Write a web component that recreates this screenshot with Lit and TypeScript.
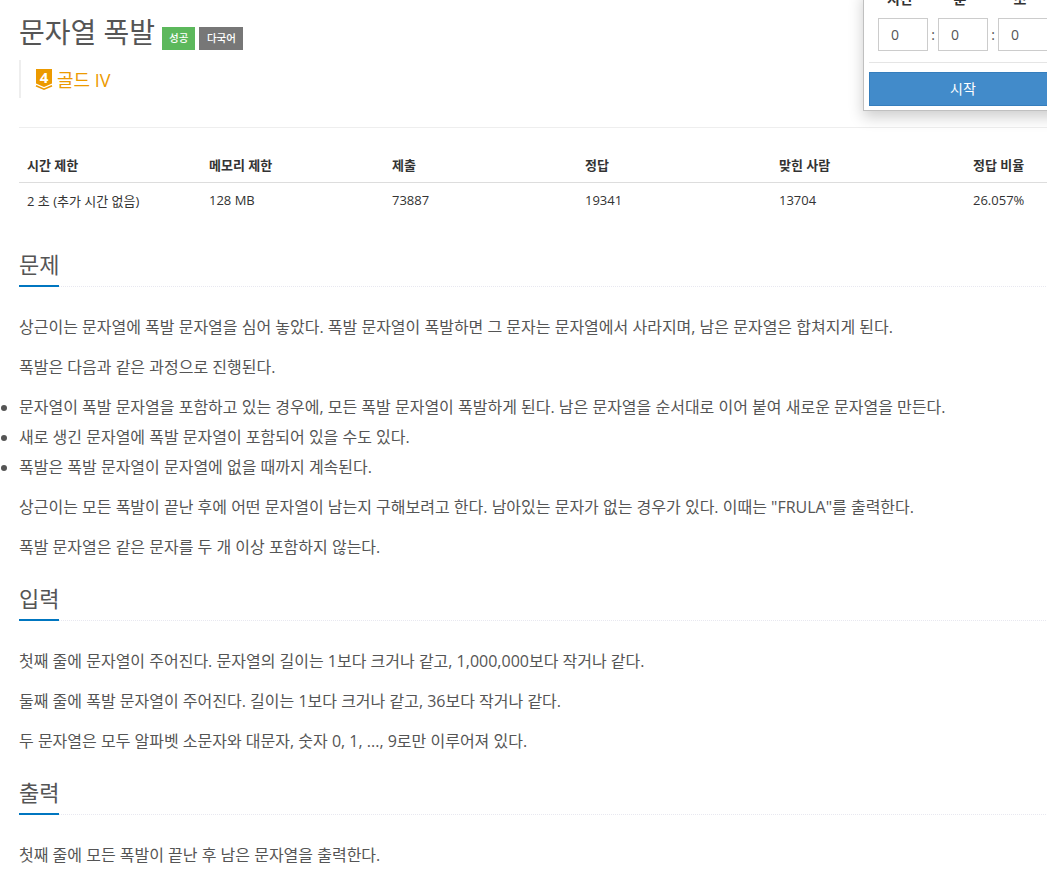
import { LitElement, html, css } from "lit";
import { customElement } from "lit/decorators.js";

@customElement("app-root")
export class AppRoot extends LitElement {
  static styles = css`
    :host { display: block; width: 1047px; height: 885px; overflow: hidden; position: relative; background: #fff;
      font-family: "Open Sans", "Noto Sans CJK KR", sans-serif; font-size: 16px; color: #555; }
    * { box-sizing: border-box; }
    .page { padding: 16px 0 0 19px; width: 1100px; }
    .title-row { display: flex; align-items: flex-end; height: 34px; }
    h1 { margin: 0; font-size: 28px; font-weight: 400; line-height: 32px; color: #555; align-self: flex-start; }
    .badge { height: 23px; line-height: 23px; font-size: 10.5px; font-weight: 500; color: #fff; padding: 0 7px; margin-left: 4px; }
    .badge.first { margin-left: 7px; background: #5cb85c; }
    .badge.gray { background: #777; padding: 0 7.5px; }
    .tier { margin-top: 10px; height: 38px; border-left: 2px solid #eee; padding-left: 15px; display: flex; align-items: center; gap: 5px; color: #ec9a00; font-size: 18px; }
    .tier svg { display: block; overflow: visible; }
    .rule { border-top: 1px solid #eee; margin-top: 29px; }
    table { border-collapse: collapse; table-layout: fixed; width: 1100px; margin-top: 20px; color: #333; font-size: 13px; }
    th { text-align: left; font-weight: 700; height: 34px; padding: 0 8px; border-bottom: 1px solid #ddd; }
    td { height: 36px; padding: 0 8px; }
    .sec { display: flex; flex-direction: column; margin-top: 11px; }
    .sec.first { margin-top: 31px; }
    h2 { margin: 0; font-size: 22px; font-weight: 400; line-height: 30px; height: 38px; color: #555; border-bottom: 1px dotted #e8e8f0; position: relative; }
    h2::after { content: ""; position: absolute; left: 0; bottom: -1px; width: 40px; height: 2px; background: #0076c0; }
    p { margin: 0 0 10px; line-height: 30px; height: 30px; white-space: nowrap; }
    .body { margin-top: 25px; }
    ul { margin: 0 0 10px; padding: 0; list-style: disc; }
    li { line-height: 30px; height: 30px; white-space: nowrap; }
    .timer { position: absolute; left: 863px; top: -10px; width: 220px; height: 121px; background: #fff; border: 1px solid #c0c0c0; box-shadow: 0 6px 14px rgba(0,0,0,.2); padding: 0 5px; }
    .labels { display: flex; height: 20px; font-size: 14px; font-weight: 700; margin: -3px 0 0 9px; }
    .labels span { width: 60px; padding-right: 16px; text-align: center; color: #333; }
    .inputs { display: flex; align-items: center; margin-top: 10px; margin-left: 9px; }
    .inp { width: 50px; height: 33px; border: 1px solid #ccc; padding-left: 12px; line-height: 31px; color: #555; font-size: 14px; }
    .colon { width: 10px; text-align: center; font-size: 14px; }
    .sep { border-top: 1px solid #e5e5e5; margin-top: 11px; }
    .start { margin-top: 9px; height: 34px; background: #428bca; border: 1px solid #357ebd; color: #fff; text-align: center; line-height: 32px; font-size: 14px; width: 188px; }
  `;

  render() {
    return html`
      <div class="page">
        <div class="title-row">
          <h1>문자열 폭발</h1>
          <span class="badge first">성공</span>
          <span class="badge gray">다국어</span>
        </div>
        <div class="tier">
          <svg width="16" height="21" viewBox="0 0 16 21"><path fill="#ec9a00" d="M0 0H16V14.5L8 18 0 14.5Z"/><path fill="none" stroke="#ec9a00" stroke-width="1.6" d="M0 16.7 8 20.2 16 16.7"/><text x="8" y="13.5" font-size="15" font-weight="700" text-anchor="middle" fill="#fff" font-family="Open Sans">4</text></svg>
          <span>골드 IV</span>
        </div>
        <div class="rule"></div>
        <table>
          <colgroup><col style="width:182px"><col style="width:183px"><col style="width:193px"><col style="width:194px"><col style="width:194px"><col></colgroup>
          <tr><th>시간 제한</th><th>메모리 제한</th><th>제출</th><th>정답</th><th>맞힌 사람</th><th>정답 비율</th></tr>
          <tr><td>2 초 (추가 시간 없음)</td><td>128 MB</td><td>73887</td><td>19341</td><td>13704</td><td>26.057%</td></tr>
        </table>
        <div class="sec first">
          <h2>문제</h2>
          <div class="body">
            <p>상근이는 문자열에 폭발 문자열을 심어 놓았다. 폭발 문자열이 폭발하면 그 문자는 문자열에서 사라지며, 남은 문자열은 합쳐지게 된다.</p>
            <p>폭발은 다음과 같은 과정으로 진행된다.</p>
            <ul>
              <li>문자열이 폭발 문자열을 포함하고 있는 경우에, 모든 폭발 문자열이 폭발하게 된다. 남은 문자열을 순서대로 이어 붙여 새로운 문자열을 만든다.</li>
              <li>새로 생긴 문자열에 폭발 문자열이 포함되어 있을 수도 있다.</li>
              <li>폭발은 폭발 문자열이 문자열에 없을 때까지 계속된다.</li>
            </ul>
            <p>상근이는 모든 폭발이 끝난 후에 어떤 문자열이 남는지 구해보려고 한다. 남아있는 문자가 없는 경우가 있다. 이때는 "FRULA"를 출력한다.</p>
            <p>폭발 문자열은 같은 문자를 두 개 이상 포함하지 않는다.</p>
          </div>
        </div>
        <div class="sec">
          <h2>입력</h2>
          <div class="body">
            <p>첫째 줄에 문자열이 주어진다. 문자열의 길이는 1보다 크거나 같고, 1,000,000보다 작거나 같다.</p>
            <p>둘째 줄에 폭발 문자열이 주어진다. 길이는 1보다 크거나 같고, 36보다 작거나 같다.</p>
            <p>두 문자열은 모두 알파벳 소문자와 대문자, 숫자 0, 1, ..., 9로만 이루어져 있다.</p>
          </div>
        </div>
        <div class="sec">
          <h2>출력</h2>
          <div class="body">
            <p>첫째 줄에 모든 폭발이 끝난 후 남은 문자열을 출력한다.</p>
          </div>
        </div>
      </div>
      <div class="timer">
        <div class="labels"><span>시간</span><span>분</span><span>초</span></div>
        <div class="inputs">
          <div class="inp">0</div><span class="colon">:</span><div class="inp">0</div><span class="colon">:</span><div class="inp">0</div>
        </div>
        <div class="sep"></div>
        <div class="start">시작</div>
      </div>
    `;
  }
}
